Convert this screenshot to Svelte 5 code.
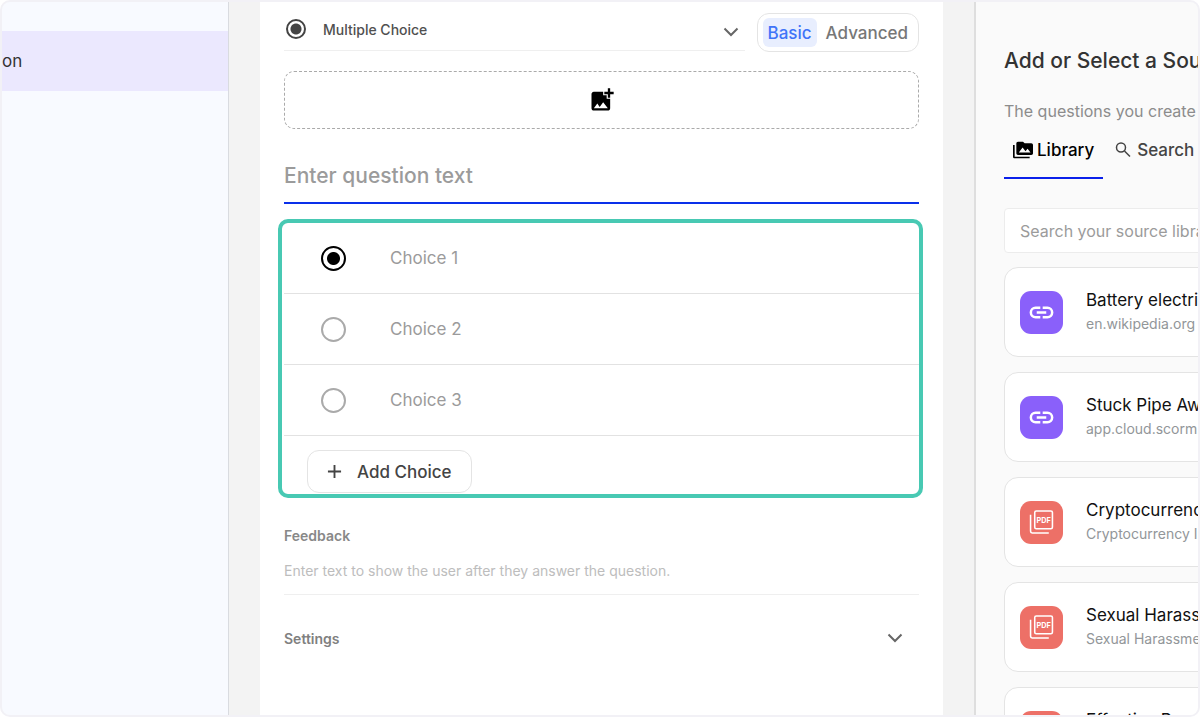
<script>
  let questionType = 'multiple';
  let mode = 'Basic';
  let tab = 'library';
  let correct = 0;

  const modes = ['Basic', 'Advanced'];
  const choices = ['Choice 1', 'Choice 2', 'Choice 3'];

  const sources = [
    { kind: 'link', title: 'Battery electric vehicle', detail: 'en.wikipedia.org' },
    { kind: 'link', title: 'Stuck Pipe Awareness', detail: 'app.cloud.scorm.com' },
    { kind: 'pdf', title: 'Cryptocurrency Intro', detail: 'Cryptocurrency Intro.pdf' },
    { kind: 'pdf', title: 'Sexual Harassment', detail: 'Sexual Harassment.pdf' },
    { kind: 'pdf', title: 'Effective Presentations', detail: 'Effective Presentations.pdf' }
  ];
</script>

<div class="app">
  <nav class="sidebar" aria-label="Questions">
    <a class="sidebar-item" href="#question">on</a>
  </nav>

  <main class="workspace">
    <div class="editor">
      <div class="type-row">
        <div class="type-select">
          <span class="dot-icon"></span>
          <select bind:value={questionType} aria-label="Question type">
            <option value="multiple">Multiple Choice</option>
          </select>
          <svg class="chevron" viewBox="0 0 16 10"><path d="M1.500 1.500L8 8l6.500-6.500" /></svg>
        </div>
        <div class="mode-toggle">
          {#each modes as item}
            <button class:active={mode === item} on:click={() => (mode = item)}>{item}</button>
          {/each}
        </div>
      </div>

      <button class="image-drop" aria-label="Add image">
        <svg viewBox="0 0 24 24">
          <path d="M19 7v2.99s-1.99.01-2 0V7h-3s.01-1.99 0-2h3V2h2v3h3v2h-3zm-3 4V8h-3V5H5c-1.100 0-2 .9-2 2v12c0 1.100.9 2 2 2h12c1.100 0 2-.9 2-2v-8h-3zM5 19l3-4 2 3 3-4 4 5H5z" />
        </svg>
      </button>

      <input class="question" type="text" placeholder="Enter question text" aria-label="Question text" />

      <div class="choices">
        {#each choices as choice, i}
          <div class="choice">
            <input type="radio" name="correct" value={i} bind:group={correct} aria-label={choice} />
            <input class="choice-text" type="text" placeholder={choice} aria-label="{choice} text" />
          </div>
        {/each}
        <button class="add-choice">
          <svg viewBox="0 0 16 16"><path d="M8 1v14M1 8h14" /></svg>
          Add Choice
        </button>
      </div>

      <label class="feedback-label" for="feedback">Feedback</label>
      <input
        id="feedback"
        class="feedback"
        type="text"
        placeholder="Enter text to show the user after they answer the question."
      />

      <button class="settings">
        Settings
        <svg class="chevron" viewBox="0 0 16 10"><path d="M1.500 1.500L8 8l6.500-6.500" /></svg>
      </button>
    </div>
  </main>

  <aside class="sources">
    <div class="sources-inner">
      <h2>Add or Select a Source</h2>
      <p class="intro">The questions you create</p>

      <div class="tabs">
        <button class:active={tab === 'library'} on:click={() => (tab = 'library')}>
          <svg class="library-icon" viewBox="0 0 24 24">
            <path d="M2 6H0v5h.01L0 20c0 1.100.9 2 2 2h18v-2H2V6zm20-2h-8l-2-2H6c-1.100 0-1.990.9-1.990 2L4 16c0 1.100.9 2 2 2h16c1.100 0 2-.9 2-2V6c0-1.100-.9-2-2-2zM7 15l4.500-6 3.500 4.510 2.500-3.010L21 15H7z" />
          </svg>
          Library
        </button>
        <button class:active={tab === 'search'} on:click={() => (tab = 'search')}>
          <svg class="search-icon" viewBox="0 0 18 18">
            <circle cx="6" cy="6.500" r="4.500" /><path d="M9.500 10L15 15.500" />
          </svg>
          Search
        </button>
      </div>

      <input class="source-search" type="text" placeholder="Search your source library" aria-label="Search your source library" />

      {#each sources as source}
        <a class="source" href="#source">
          <span class="source-icon {source.kind}">
            {#if source.kind === 'link'}
              <svg viewBox="1.500 1.500 21 21">
                <path d="M11 7H7a5 5 0 0 0 0 10h4v-2.100H7a2.900 2.900 0 0 1 0-5.800h4V7zM8 11v2h8v-2H8zM17 7h-4v2.100h4a2.900 2.900 0 0 1 0 5.800h-4V17h4a5 5 0 0 0 0-10z" />
              </svg>
            {:else}
              <svg viewBox="0 0 24 24">
                <path class="page" d="M7 1h14a1.500 1.500 0 0 1 1.500 1.500v14A1.500 1.500 0 0 1 21 18H7a1.500 1.500 0 0 1-1.500-1.500v-14A1.500 1.500 0 0 1 7 1z" />
                <path class="page" d="M1.500 4.500v16A1.500 1.500 0 0 0 3 22h16" />
                <text x="14" y="12" text-anchor="middle">PDF</text>
              </svg>
            {/if}
          </span>
          <span class="source-text">
            <strong>{source.title}</strong>
            <small>{source.detail}</small>
          </span>
        </a>
      {/each}
    </div>
  </aside>
</div>

<style>
  :global(body) {
    background: #fff;
  }

  .app {
    box-sizing: border-box;
    display: flex;
    height: 100vh;
    border: 2px solid #f2f1f6;
    border-radius: 10px;
    overflow: hidden;
    background: #f3f3f3;
    font-family: Inter, 'Liberation Sans', sans-serif;
    color: #333;
  }

  .app * {
    box-sizing: border-box;
  }

  button,
  input,
  select {
    margin: 0;
    padding: 0;
    border: none;
    border-radius: 0;
    outline: none;
    background: none;
    font: inherit;
    color: inherit;
  }

  button {
    cursor: pointer;
  }

  a {
    color: inherit;
    text-decoration: none;
  }

  svg {
    display: block;
    flex: none;
  }

  .sidebar {
    flex: 0 0 227px;
    padding-top: 29px;
    border-right: 1px solid #d9dbe0;
    background: #f8faff;
  }

  .sidebar-item {
    display: flex;
    align-items: center;
    height: 60px;
    background: #ebe8fe;
    font-size: 17px;
  }

  .workspace {
    flex: 1;
    min-width: 0;
    padding: 0 31px;
  }

  .editor {
    height: 100%;
    padding: 10px 24px 0;
    background: #fff;
  }

  .type-row {
    display: flex;
    gap: 12px;
  }

  .type-select {
    display: flex;
    flex: 1;
    align-items: center;
    height: 39px;
    padding: 0 6px 4px 2px;
    border-bottom: 1px solid #efefef;
  }

  .type-select .chevron {
    margin-top: 5px;
  }

  .dot-icon {
    width: 20px;
    height: 20px;
    border: 2px solid #444;
    border-radius: 50%;
    background: radial-gradient(circle, #444 5px, transparent 6px);
  }

  .type-select select {
    flex: 1;
    padding-left: 17px;
    appearance: none;
    font-size: 14px;
    font-weight: 500;
    color: #505050;
  }

  .chevron {
    width: 16px;
    height: 10px;
    fill: none;
    stroke: #666;
    stroke-width: 2;
  }

  .mode-toggle {
    display: flex;
    align-items: center;
    height: 39px;
    margin-top: 1px;
    padding: 0 5px;
    border: 1px solid #e4e4e4;
    border-radius: 12px;
  }

  .mode-toggle button {
    height: 29px;
    padding: 0 5px;
    border-radius: 6px;
    font-size: 17px;
    font-weight: 500;
    color: #777;
  }

  .mode-toggle button + button {
    margin-left: 4px;
  }

  .mode-toggle .active {
    background: #e8eefe;
    color: #3f74f8;
  }

  .image-drop {
    display: flex;
    align-items: center;
    justify-content: center;
    width: 100%;
    height: 58px;
    margin-top: 19px;
    border: 1px dashed #aaa;
    border-radius: 10px;
  }

  .image-drop svg {
    width: 28px;
    height: 28px;
    fill: #000;
  }

  .question {
    display: block;
    width: 100%;
    height: 55px;
    margin-top: 20px;
    border-bottom: 2px solid #0a30ea;
    font-size: 21px;
    font-weight: 500;
  }

  input::placeholder {
    color: #9b9b9b;
    opacity: 1;
  }

  .choices {
    margin: 15px -4px 0 -6px;
    padding: 0 0 1px 2px;
    border: 4px solid #48c9b3;
    border-radius: 10px;
  }

  .choice {
    display: flex;
    align-items: center;
    gap: 44px;
    height: 71px;
    padding-left: 37px;
    border-bottom: 1px solid #e2e2e2;
  }

  .choice input[type='radio'] {
    width: 25px;
    height: 25px;
    border: 2px solid #aaa;
    border-radius: 50%;
    appearance: none;
  }

  .choice input[type='radio']:checked {
    border-color: #000;
    background: radial-gradient(circle, #000 6px, transparent 7px);
  }

  .choice-text {
    flex: 1;
    font-size: 17px;
  }

  .add-choice {
    display: flex;
    align-items: center;
    gap: 15px;
    height: 43px;
    margin: 14px 0 0 23px;
    padding: 0 19px;
    border: 1px solid #e4e4e4;
    border-radius: 12px;
    font-size: 17px;
    font-weight: 500;
    color: #444;
  }

  .add-choice svg {
    width: 15px;
    height: 15px;
    stroke: #444;
    stroke-width: 2;
  }

  .feedback-label {
    display: block;
    margin-top: 28px;
    font-size: 14px;
    font-weight: 600;
    line-height: 20px;
    color: #888;
  }

  .feedback {
    width: 100%;
    height: 49px;
    border-bottom: 1px solid #efefef;
    font-size: 14px;
  }

  .feedback::placeholder {
    color: #bdbdbd;
  }

  .settings {
    display: flex;
    align-items: center;
    justify-content: space-between;
    width: 100%;
    height: 40px;
    margin-top: 23px;
    padding-right: 16px;
    font-size: 14px;
    font-weight: 600;
    color: #808080;
  }

  .sources {
    flex: 0 0 224px;
    border-left: 2px solid #dedede;
    background: #fafafa;
    overflow: hidden;
  }

  .sources-inner {
    width: 400px;
    padding: 44px 28px 0;
  }

  h2 {
    margin: 0;
    font-size: 21px;
    font-weight: 500;
    line-height: 30px;
  }

  .intro {
    margin: 23px 0 0;
    font-size: 16px;
    line-height: 24px;
    color: #8c8c8c;
  }

  .tabs {
    display: flex;
    gap: 3px;
  }

  .tabs button {
    display: flex;
    align-items: center;
    gap: 4px;
    height: 56px;
    padding: 0 9px;
    border-bottom: 2px solid transparent;
    font-size: 17px;
    font-weight: 500;
    color: #444;
  }

  .tabs .active {
    border-bottom-color: #0a20ea;
    color: #000;
  }

  .library-icon {
    width: 20px;
    height: 20px;
  }

  .search-icon {
    width: 18px;
    height: 18px;
    fill: none;
    stroke: #444;
    stroke-width: 1.500;
  }

  .source-search {
    display: block;
    width: 100%;
    height: 45px;
    margin: 29px 0 14px;
    padding: 0 15px;
    border: 1px solid #ececec;
    border-radius: 4px;
    background: #fff;
    font-size: 16px;
  }

  .source {
    display: flex;
    align-items: center;
    gap: 23px;
    height: 90px;
    margin-bottom: 15px;
    padding: 0 15px;
    border: 1px solid #e4e4e4;
    border-radius: 14px;
    background: #fff;
  }

  .source-icon {
    display: flex;
    flex: none;
    align-items: center;
    justify-content: center;
    width: 43px;
    height: 43px;
    border-radius: 11px;
  }

  .source-icon svg {
    width: 25px;
    height: 25px;
    fill: #fff;
  }

  .source-icon.link {
    background: #8a60fa;
  }

  .source-icon.pdf {
    background: #ed7067;
  }

  .page {
    fill: none;
    stroke: #fff;
    stroke-width: 1.500;
  }

  .source-icon text {
    font-size: 7px;
    font-weight: 700;
  }

  .source-text {
    white-space: nowrap;
  }

  .source-text strong,
  .source-text small {
    display: block;
    line-height: 24px;
  }

  .source-text strong {
    font-size: 17px;
    font-weight: 400;
    color: #111;
  }

  .source-text small {
    font-size: 14px;
    color: #929699;
  }
</style>
